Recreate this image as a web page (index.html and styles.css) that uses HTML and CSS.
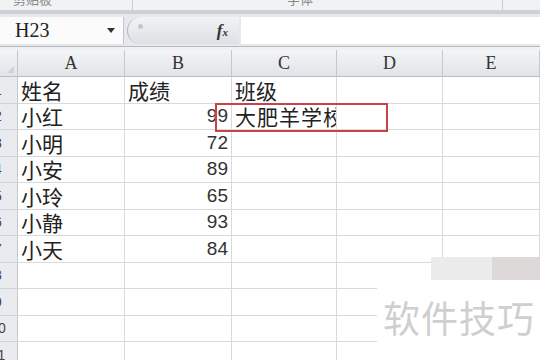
FILE: index.html
```html
<!DOCTYPE html>
<html lang="zh-CN">
<head>
  <meta charset="UTF-8" />
  <title>成绩表</title>
  <link rel="stylesheet" href="styles.css">
</head>
<body>
  <div class="ribbon">
    <div class="group g1"><span>剪贴板</span></div>
    <div class="group g2"><span>字体</span></div>
    <div class="group g3"></div>
  </div>

  <div class="fbar">
    <div class="namebox"><span class="ref">H23</span><span class="caret"></span></div>
    <div class="fxbox"><span class="dot"></span><span class="fx">f<small>x</small></span></div>
    <div class="input"></div>
  </div>
  <div class="gap"></div>

  <div class="sheet">
    <div class="grid">
      <div class="colhead corner"><span class="tri"></span></div>
      <div class="colhead">A</div>
      <div class="colhead">B</div>
      <div class="colhead">C</div>
      <div class="colhead">D</div>
      <div class="colhead">E</div>

      <div class="rowhead"><span>1</span></div>
      <div class="cell">姓名</div><div class="cell">成绩</div><div class="cell">班级</div><div class="cell"></div><div class="cell"></div>

      <div class="rowhead"><span>2</span></div>
      <div class="cell">小红</div><div class="cell num">99</div><div class="cell clip">大肥羊学校</div><div class="cell"></div><div class="cell"></div>

      <div class="rowhead"><span>3</span></div>
      <div class="cell">小明</div><div class="cell num">72</div><div class="cell"></div><div class="cell"></div><div class="cell"></div>

      <div class="rowhead"><span>4</span></div>
      <div class="cell">小安</div><div class="cell num">89</div><div class="cell"></div><div class="cell"></div><div class="cell"></div>

      <div class="rowhead"><span>5</span></div>
      <div class="cell">小玲</div><div class="cell num">65</div><div class="cell"></div><div class="cell"></div><div class="cell"></div>

      <div class="rowhead"><span>6</span></div>
      <div class="cell">小静</div><div class="cell num">93</div><div class="cell"></div><div class="cell"></div><div class="cell"></div>

      <div class="rowhead"><span>7</span></div>
      <div class="cell">小天</div><div class="cell num">84</div><div class="cell"></div><div class="cell"></div><div class="cell"></div>

      <div class="rowhead"><span>8</span></div>
      <div class="cell"></div><div class="cell"></div><div class="cell"></div><div class="cell"></div><div class="cell"></div>

      <div class="rowhead"><span>9</span></div>
      <div class="cell"></div><div class="cell"></div><div class="cell"></div><div class="cell"></div><div class="cell"></div>

      <div class="rowhead"><span>10</span></div>
      <div class="cell"></div><div class="cell"></div><div class="cell"></div><div class="cell"></div><div class="cell"></div>

      <div class="rowhead"><span>11</span></div>
      <div class="cell"></div><div class="cell"></div><div class="cell"></div><div class="cell"></div><div class="cell"></div>
    </div>

    <!-- 标注框 -->
    <div class="mark"></div>

    <!-- 水印 -->
    <div class="wm-top"><span class="swatch s1"></span><span class="swatch s2"></span></div>
    <div class="wm">软件技巧</div>
  </div>
</body>
</html>
```

FILE: styles.css
```css
html,
body {
  margin: 0;
  overflow: hidden;
  background: #fff;
}

body {
  font-family: "Liberation Sans", "Noto Sans CJK SC", sans-serif;
  color: #222;
}

/* 功能区底部 */
.ribbon {
  display: flex;
  height: 10px;
  overflow: hidden;
  background: #f1f2f4;
  border-bottom: 4px solid #cdd0d5;
}

.group {
  box-sizing: border-box;
  font-family: "Noto Sans CJK SC", sans-serif;
  font-size: 13px;
  color: #888;
}

.group span {
  display: block;
  line-height: 13px;
  margin-top: -8px;
}

.g1 {
  width: 133px;
  padding-left: 13px;
  border-right: 1px solid #c9ccd1;
}

.g2 {
  width: 370px;
  padding-left: 154px;
  border-right: 1px solid #c9ccd1;
}

.g3 {
  flex: 1;
}

/* 编辑栏 */
.fbar {
  display: flex;
  box-sizing: border-box;
  height: 33px;
  padding-top: 3px;
  background: #e6e8ec;
  border-bottom: 1px solid #b5b9bf;
}

.namebox {
  box-sizing: border-box;
  width: 124px;
  height: 27px;
  display: flex;
  align-items: center;
  justify-content: space-between;
  padding: 0 8px 0 15px;
  background: #fbfbfc;
  border-right: 1px solid #c3c7cc;
}

.ref {
  font-family: "Liberation Serif", serif;
  font-size: 20px;
  color: #222;
}

.caret {
  width: 0;
  height: 0;
  border-left: 4px solid transparent;
  border-right: 4px solid transparent;
  border-top: 5px solid #333;
}

.fxbox {
  box-sizing: border-box;
  position: relative;
  width: 112px;
  height: 27px;
  margin-left: 3px;
  display: flex;
  align-items: center;
  justify-content: flex-end;
  padding-right: 11px;
  border-radius: 14px 0 0 14px;
  border-left: 1px solid #b3b7bd;
  background: linear-gradient(#f2f3f5, #dde0e4);
}

.dot {
  position: absolute;
  left: 10px;
  top: 7px;
  width: 5px;
  height: 5px;
  border-radius: 50%;
  background: #c4c7cb;
}

.fx {
  font-family: "Liberation Serif", serif;
  font-style: italic;
  font-weight: bold;
  font-size: 17px;
  color: #333;
}

.fx small {
  font-size: 11px;
}

.input {
  flex: 1;
  height: 27px;
  margin-left: 2px;
  background: #fff;
}

.gap {
  height: 3px;
  background: #f0f1f3;
}

/* 表格 */
.sheet {
  position: relative;
}

.grid {
  display: grid;
  grid-template-columns: 18px 107px 107px 105px 106px 1fr;
  grid-template-rows: 27px;
  grid-auto-rows: 26.5px;
}

.colhead {
  box-sizing: border-box;
  display: flex;
  align-items: center;
  justify-content: center;
  font-family: "Liberation Serif", serif;
  font-size: 18px;
  color: #333;
  background: linear-gradient(#f3f4f6, #e1e4e8);
  border-right: 1px solid #c5c9ce;
  border-bottom: 1px solid #b9bdc3;
}

.corner {
  position: relative;
}

.tri {
  position: absolute;
  right: 3px;
  bottom: 3px;
  width: 0;
  height: 0;
  border-left: 7px solid transparent;
  border-bottom: 7px solid #cfd2d6;
}

.rowhead {
  box-sizing: border-box;
  overflow: hidden;
  display: flex;
  align-items: center;
  background: #e9ebee;
  border-right: 1px solid #c5c9ce;
  border-bottom: 1px solid #cfd3d8;
  font-size: 14px;
  color: #444;
}

.rowhead span {
  display: block;
  flex: none;
  width: 24px;
  margin-left: -14px;
  text-align: center;
}

.cell {
  box-sizing: border-box;
  display: flex;
  align-items: center;
  padding: 0 3px;
  border-right: 1px solid #d9d9d9;
  border-bottom: 1px solid #d9d9d9;
  font-family: "Noto Sans CJK SC", sans-serif;
  font-size: 21px;
  color: #222;
  white-space: nowrap;
}

.num {
  justify-content: flex-end;
  font-family: "Liberation Sans", sans-serif;
  font-size: 19px;
  color: #333;
}

.clip {
  overflow: hidden;
  letter-spacing: 1px;
}

.mark {
  position: absolute;
  left: 215px;
  top: 53px;
  width: 173px;
  height: 29px;
  box-sizing: border-box;
  border: 2px solid #c8424b;
}

.wm-top {
  position: absolute;
  left: 431px;
  top: 207px;
  right: 0;
  height: 26px;
  display: flex;
  align-items: flex-start;
  background: #fff;
}

.swatch {
  height: 23px;
}

.s1 {
  width: 61px;
  background: #ebebeb;
}

.s2 {
  flex: 1;
  background: #dcd9d8;
}

.wm {
  position: absolute;
  left: 377px;
  top: 232px;
  right: 0;
  height: 90px;
  box-sizing: border-box;
  padding: 17px 0 0 6px;
  background: #fff;
  font-family: "Noto Sans CJK SC", sans-serif;
  font-size: 37px;
  line-height: 1;
  color: #cfcfcf;
  letter-spacing: 1px;
}
```
